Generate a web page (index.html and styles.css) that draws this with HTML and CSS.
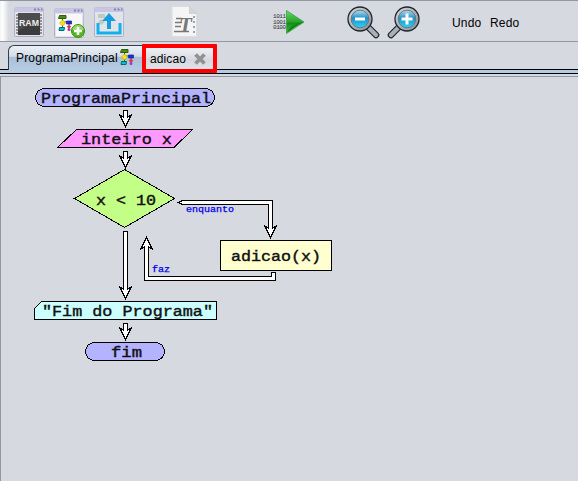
FILE: index.html
```html
<!DOCTYPE html>
<html lang="pt">
<head>
<meta charset="utf-8">
<title>Fluxograma</title>
<link rel="stylesheet" href="styles.css">
</head>
<body>
<svg class="defs" width="0" height="0" aria-hidden="true">
  <defs>
    <linearGradient id="win" x1="0" y1="0" x2="0" y2="1"><stop offset="0" stop-color="#c5c0e1"/><stop offset="1" stop-color="#aaa9c8"/></linearGradient>
    <linearGradient id="lens" x1="0" y1="0" x2="0" y2="1"><stop offset="0" stop-color="#b5dcf0"/><stop offset=".45" stop-color="#2291c7"/><stop offset="1" stop-color="#27d5f4"/></linearGradient>
    <linearGradient id="metal" x1="0" y1="0" x2="1" y2="1"><stop offset="0" stop-color="#d7dce2"/><stop offset="1" stop-color="#858c96"/></linearGradient>
    <linearGradient id="green" x1="0" y1="0" x2="0" y2="1"><stop offset="0" stop-color="#65d965"/><stop offset=".5" stop-color="#29a52b"/><stop offset=".55" stop-color="#168b1b"/><stop offset="1" stop-color="#35c335"/></linearGradient>
    <g id="window">
      <rect x=".5" y=".5" width="29" height="29" rx="1" fill="#e3e4e9" stroke="url(#win)"/>
      <path d="M1 1H29V5H1Z" fill="#c9c6e3"/>
      <path d="M20 2.5H22M23.5 2.5H25.5M27 2.5H28.5" stroke="#8780b4" stroke-width="2"/>
    </g>
    <g id="flow">
      <path d="M4.5 3V13M4 7H12M11 7V14" fill="none" stroke="#555" stroke-width="1"/>
      <path d="M1.5.5H8V3.5H.5Z" fill="#459010" stroke="#315d0d"/>
      <path d="M4.5 5L7.5 8L4.5 11L1.5 8Z" fill="#ffe600" stroke="#a98a00" stroke-width=".5"/>
      <path d="M8.5 6H13.5V9H8.5Z" fill="#1830e8" stroke="#17208c" stroke-width=".7"/>
      <path d="M1.5 12.5H6.5L6 15.5H1Z" fill="#00c6c9" stroke="#046970"/>
      <path d="M11 10L13.3 11.8L11 13.5L8.7 11.8Z" fill="#ec3030"/>
      <circle cx="11" cy="14.5" r="1.5" fill="#a337ce"/>
    </g>
  </defs>
</svg>

<header class="toolbar">
  <span class="grip"></span>
  <svg class="icon ram" width="30" height="31" viewBox="0 0 30 31">
    <use href="#window"/>
    <path d="M2 8H28M2 11H28M2 14H28M2 17H28M2 20H28M2 23H28M2 26H28" stroke="#777" stroke-width="1.5"/>
    <rect x="4" y="6" width="22" height="22" fill="#3c3c3e"/>
    <path d="M4 6H26V12L4 24Z" fill="#4c4c4e"/>
    <text class="ram-text" x="5" y="18.7" textLength="20" lengthAdjust="spacingAndGlyphs">RAM</text>
  </svg>
  <svg class="icon add" width="32" height="32" viewBox="0 0 32 32">
    <use href="#window"/>
    <path d="M2 6H28V28H2Z" fill="#f8f8fa"/>
    <use href="#flow" x="4" y="7"/>
    <circle cx="24" cy="23" r="6.5" fill="#55b71f" stroke="#3c8f16"/>
    <path d="M18.5 22A5.5 5 0 0 1 29.5 22Z" fill="#96d965"/>
    <path d="M24 19V27M20 23H28" stroke="#fff" stroke-width="2.6"/>
  </svg>
  <svg class="icon export" width="30" height="30" viewBox="0 0 30 30">
    <use href="#window"/>
    <path d="M4 7H11V11H4ZM7 12L11 15L7 18L4 15Z" fill="#bfcabf"/>
    <path d="M4 16V26H26V16" fill="none" stroke="#12b1ec" stroke-width="3"/>
    <path d="M15 6L22 14H17V22H13V14H8Z" fill="#169fe0"/>
  </svg>
  <svg class="icon doc" width="27" height="32" viewBox="0 0 27 32">
    <path d="M1 .5H18.5L25.5 7.5V30.5H1Z" fill="#f5f5f5" stroke="#ddd"/>
    <path d="M18.5 .5V7.5H25.5Z" fill="#d5d5d7" stroke="#c6c6c8" stroke-width=".6"/>
    <path d="M5 12.5H11M4 16.5H11M4 20.5H10M3 25.5H18" stroke="#777" stroke-width="1.3"/>
    <path d="M23 10V28" stroke="#888" stroke-width="1.5" stroke-dasharray="2 3"/>
    <text class="doc-text" x="8" y="25.5">T</text>
  </svg>
  <svg class="icon run" width="33" height="26" viewBox="0 0 33 26">
    <g class="bits"><text x="0" y="9" textLength="13">1011</text><text x="0" y="14.5" textLength="13">1001</text><text x="0" y="20" textLength="13">0100</text></g>
    <path d="M13.5 1.5L31 13L13.5 24.5Z" fill="url(#green)" stroke="#38963a" stroke-width=".7"/>
    <path d="M14 23.5Q17 16 30 13Z" fill="#0d7a16"/>
    <path d="M15 23.5Q20 18 29 13.7Z" fill="#36c539"/>
  </svg>
  <svg class="icon zoom-out" width="34" height="34" viewBox="0 0 34 34">
    <path d="M21.5 21.5L29 29" stroke="#20252b" stroke-width="6.6" stroke-linecap="round"/>
    <path d="M21.5 21.5L29 29" stroke="#a7b0b9" stroke-width="4.2" stroke-linecap="round"/>
    <circle cx="13" cy="13" r="12" fill="url(#metal)" stroke="#20252b" stroke-width="1.3"/>
    <circle cx="13" cy="13" r="8.8" fill="url(#lens)" stroke="#6c7680"/>
    <path d="M8 13H18" stroke="#fff" stroke-width="3"/>
  </svg>
  <svg class="icon zoom-in" width="34" height="34" viewBox="0 0 34 34">
    <path d="M11.5 21.5L4 29" stroke="#20252b" stroke-width="6.6" stroke-linecap="round"/>
    <path d="M11.5 21.5L4 29" stroke="#a7b0b9" stroke-width="4.2" stroke-linecap="round"/>
    <circle cx="20" cy="13" r="12" fill="url(#metal)" stroke="#20252b" stroke-width="1.3"/>
    <circle cx="20" cy="13" r="8.8" fill="url(#lens)" stroke="#6c7680"/>
    <path d="M14.5 13H25.5M20 7.5V18.5" stroke="#fff" stroke-width="3"/>
  </svg>
  <span class="undo">Undo</span>
  <span class="redo">Redo</span>
</header>

<nav class="tabs">
  <div class="tab main-tab"><span>ProgramaPrincipal</span><svg width="15" height="17" viewBox="0 0 15 17"><use href="#flow"/></svg></div>
  <div class="tab marked-tab"><span>adicao</span><svg width="14" height="14" viewBox="0 0 14 14"><path d="M2.5 2.5L11.5 11.5M11.5 2.5L2.5 11.5" stroke="#929292" stroke-width="3.8"/></svg></div>
</nav>

<main class="canvas">
  <svg class="diagram" width="577" height="404" viewBox="1 77 577 404">
    <g class="shape">
      <rect x="35.5" y="88.5" width="179" height="18" rx="9" fill="#b3b3ff"/>
      <path d="M76.5 129.5H192.5L174 147.5H57.5Z" fill="#ff99ff"/>
      <path d="M124.5 169.5L174.5 198.5L124.5 227.5L74.5 198.5Z" fill="#c3ff86"/>
      <rect x="220.5" y="240.5" width="111" height="30" fill="#ffffd0"/>
      <path d="M41.5 301.5H216.5V319.5H34.5V308.5Z" fill="#ccffff"/>
      <rect x="85.5" y="342.5" width="79" height="18" rx="9" fill="#b3b3ff"/>
    </g>
    <g class="arrow">
      <path d="M123.5 110.5H127.5V117.5L131.5 114.5L125.5 126.5L119.5 114.5L123.5 117.5Z"/>
      <path d="M123.5 151.5H127.5V158.5L131.5 155.5L125.5 167.5L119.5 155.5L123.5 158.5Z"/>
      <path d="M123.5 231.5H127.5V289.5L131.5 286.5L125.5 298.5L119.5 286.5L123.5 289.5Z"/>
      <path d="M123.5 323.5H127.5V330.5L131.5 327.5L125.5 339.5L119.5 327.5L123.5 330.5Z"/>
      <path d="M178.5 202.5L182.5 200.5H272.5V228.5L276.5 225.5L270.5 237.5L264.5 225.5L268.5 228.5V204.5H182.5Z"/>
      <path d="M271.5 272.5H275.5V280.5H144.5V246.5L140.5 249.5L146.5 237.5L152.5 249.5L148.5 246.5V276.5H271.5Z"/>
    </g>
    <g class="label">
      <text x="41" y="103" textLength="170" lengthAdjust="spacingAndGlyphs">ProgramaPrincipal</text>
      <text x="81" y="144" textLength="91" lengthAdjust="spacingAndGlyphs">inteiro x</text>
      <text x="96" y="205" textLength="60" lengthAdjust="spacingAndGlyphs">x &lt; 10</text>
      <text x="231" y="261" textLength="90" lengthAdjust="spacingAndGlyphs">adicao(x)</text>
      <text x="42" y="316" textLength="171" lengthAdjust="spacingAndGlyphs">"Fim do Programa"</text>
      <text x="111" y="357" textLength="31" lengthAdjust="spacingAndGlyphs">fim</text>
    </g>
    <g class="branch">
      <text x="186" y="212" textLength="48" lengthAdjust="spacingAndGlyphs">enquanto</text>
      <text x="152" y="272" textLength="18" lengthAdjust="spacingAndGlyphs">faz</text>
    </g>
  </svg>
</main>
</body>
</html>
```

FILE: styles.css
```css
* { box-sizing: border-box; }
body { margin: 0; width: 578px; height: 481px; overflow: hidden; display: flex; flex-direction: column; background: #d6d9e0; color: #000; font: 12px "Liberation Sans", sans-serif; }
.defs { display: block; flex: none; width: 0; height: 0; }
.toolbar { height: 42px; flex: none; display: flex; align-items: flex-start; border-top: 1px solid #9396a3; border-bottom: 1px solid #9396a3; }
.grip { width: 9px; height: 40px; background: linear-gradient(90deg, #f1f2f4, #fff 25%, #d6d9e0); }
.icon { flex: none; display: block; }
.ram { margin: 6px 0 0 5px; }
.add { margin: 7px 0 0 10px; }
.export { margin: 6px 0 0 8px; }
.doc { margin: 5px 0 0 47px; }
.run { margin: 8px 0 0 75px; }
.zoom-out { margin: 5px 0 0 41px; }
.zoom-in { margin: 5px 0 0 6px; }
.undo, .redo { width: 30px; line-height: 14px; margin-top: 15px; letter-spacing: .2px; }
.undo { margin-left: 31px; }
.redo { margin-left: 8px; }
.ram-text { font: bold 9px "Liberation Sans", sans-serif; fill: #eee; }
.doc-text { font: italic bold 21px "Liberation Serif", serif; fill: #777; }
.bits { font: 6px "Liberation Mono", monospace; fill: #333; }
.tabs { height: 34px; flex: none; display: flex; align-items: flex-start; background: linear-gradient(#d6d9e0 27px, #000 27px 28px, #b4cbe3 28px 31px, #000 31px 32px, #d6d9e0 32px); }
.tab { display: flex; white-space: nowrap; }
.main-tab { margin: 3px 0 0 8px; width: 134px; height: 25px; padding: 5px 0 0 7px; border: solid #2b3e55; border-width: 1px 0 0 1px; border-radius: 6px 0 0 0; background: linear-gradient(#eef1f6, #d2dce8 43%, #abc0d5 47%, #b6cce3); line-height: 14px; }
.main-tab span { width: 104px; letter-spacing: .18px; }
.main-tab svg { margin-top: -2px; }
.marked-tab { width: 75px; height: 29px; margin-top: 2px; padding: 4px 0 0 4px; border: 4px solid #f00; border-radius: 1px; background: linear-gradient(#eff0f3, #d9dce3 50%, #d4d7dd 51%, #dfe3e8) content-box, #e2e4e9; line-height: 14px; align-items: flex-start; }
.marked-tab { background: linear-gradient(#eff0f3, #d9dce3 50%, #d4d7dd 51%, #dfe3e8); }
.marked-tab span { width: 43px; letter-spacing: .1px; }
.canvas { height: 405px; border-left: 1px solid #9396a3; border-top: 1px solid #9396a3; }
.diagram { display: block; }
.shape, .arrow { stroke: #000; stroke-width: 1; shape-rendering: crispEdges; }
.arrow { fill: #fff; }
.label { font: 14.5px "Liberation Mono", monospace; fill: #111; stroke: #111; stroke-width: .4px; }
.branch { font: 8.5px "Liberation Mono", monospace; fill: #0000f0; stroke: #0000f0; stroke-width: .25px; }
```
